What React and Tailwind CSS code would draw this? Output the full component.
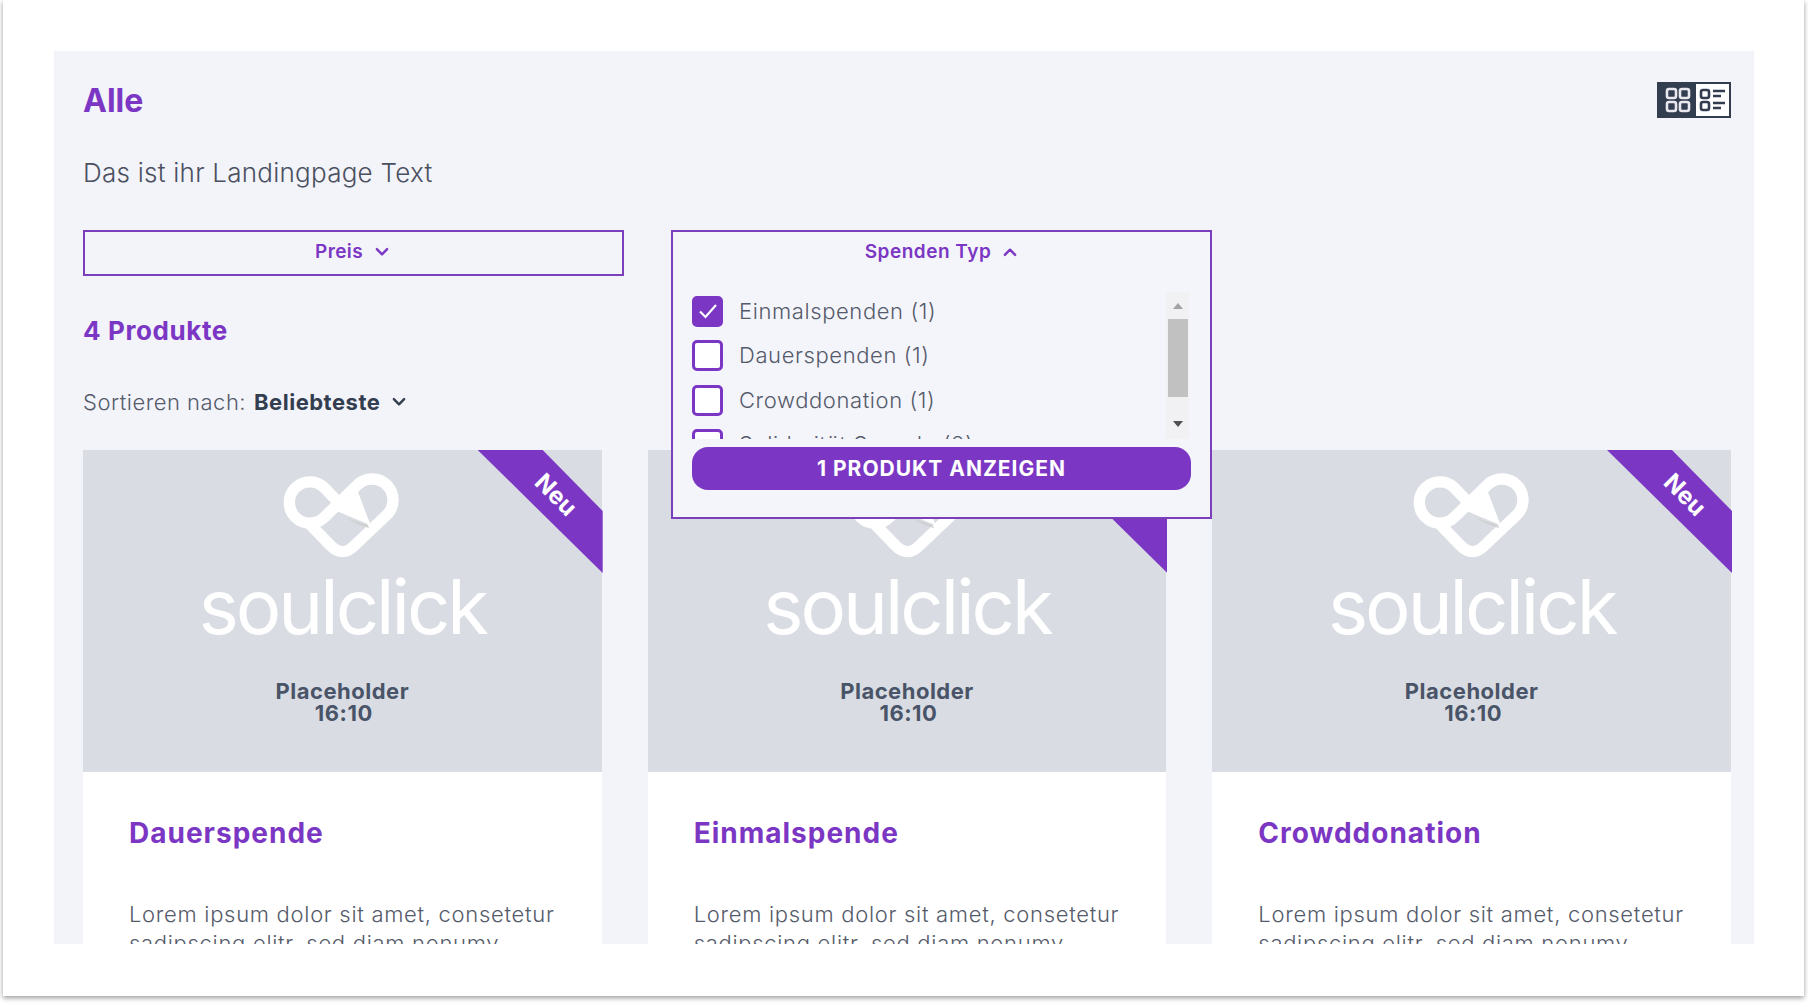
function Chevron({ up = false, className = "" }) {
  return (
    <svg viewBox="0 0 14 10" className={className} fill="none" stroke="currentColor" strokeWidth="2.1" strokeLinecap="round" strokeLinejoin="round">
      <path d={up ? "M2.5 7.5 L7 3 L11.5 7.5" : "M2.5 2.5 L7 7 L11.5 2.5"} />
    </svg>
  );
}

function Logo() {
  return (
    <svg viewBox="0 0 450 330" className="w-[150px] h-[110px] mt-[10px] ml-[6px] shrink-0" fill="none">
      <path d="M112 185 L180 255 Q218 295 255 255 L350 165 A62 62 0 0 0 262 75 L165 170 A62 62 0 1 1 165 85 L222 145" stroke="#ffffff" strokeWidth="34" strokeLinejoin="round" />
      <path d="M263 94 L302 196 L205 155 Z" fill="#ffffff" />
      <path d="M228 174 L292 195 L298 205 L262 192 Z" fill="#cfcfcf" />
    </svg>
  );
}

function Card({ title }) {
  return (
    <div className="bg-white h-[600px]">
      <div className="relative h-[322px] bg-[#d9dde3] flex flex-col items-center">
        <Logo />
        <div className="text-white text-[76px] leading-[76px] mt-[-2px] font-normal tracking-[-3px]">soulclick</div>
        <div className="mt-[36px] text-[22px] leading-[22px] font-bold tracking-[0.5px] text-[#4a5468] text-center">
          Placeholder
          <br />
          <span className="pl-[3px]">16:10</span>
        </div>
        <div className="absolute top-0 right-[-1px] w-[125px] h-[123px] bg-[#7b37c4] [clip-path:polygon(0_0,65px_0,125px_61px,125px_123px)]" />
        <div className="absolute top-[33px] right-[22px] rotate-45 text-white font-bold text-[24px] leading-[24px]">Neu</div>
      </div>
      <div className="px-[46px] pt-[44px]">
        <div className="text-[28px] leading-[34px] font-bold tracking-[1px] text-[#7b37c4]">{title}</div>
        <p className="mt-[50px] text-[22px] leading-[29px] tracking-[0.7px] text-[#555b6a] font-light">
          Lorem ipsum dolor sit amet, consetetur sadipscing elitr, sed diam nonumy
        </p>
      </div>
    </div>
  );
}

function Check({ label, checked }) {
  return (
    <div className="flex items-center h-[44.5px] shrink-0">
      <div className={`w-[31px] h-[31px] rounded-[5px] border-[3px] border-[#7b37c4] flex items-center justify-center ${checked ? "bg-[#7b37c4]" : "bg-white"}`}>
        {checked && (
          <svg viewBox="0 0 24 24" className="w-[24px] h-[24px]" fill="none" stroke="#ffffff" strokeWidth="2.2">
            <path d="M4 12.5 L9.5 18 L20 6" />
          </svg>
        )}
      </div>
      <span className="ml-[16px] text-[22px] tracking-[0.6px] text-[#555b6a] font-light">{label}</span>
    </div>
  );
}

export default function App() {
  return (
    <div className="min-h-[1004px] bg-white font-['Inter',sans-serif]">
      <div className="ml-[3px] w-[1801px] h-[996px] bg-white shadow-[0_2px_5px_rgba(0,0,0,0.4)] px-[51px] pt-[51px]">
        <div className="w-[1700px] h-[893px] bg-[#f3f3fa] overflow-hidden pl-[29px] pr-[23px] pt-[31px]">
          <div className="flex items-center justify-between h-[36px]">
            <h1 className="text-[32px] font-bold text-[#7b37c4] mt-[2px]">Alle</h1>
            <div className="flex w-[74px] h-[36px] border-[2px] border-[#333d50] bg-white">
              <div className="w-[37px] bg-[#333d50] flex items-center justify-center">
                <svg viewBox="0 0 30 28" className="w-[30px] h-[28px]" fill="none" stroke="#e8e8ee" strokeWidth="2.6">
                  <rect x="4" y="3" width="9" height="9" rx="2" /><rect x="17" y="3" width="9" height="9" rx="2" />
                  <rect x="4" y="16" width="9" height="9" rx="2" /><rect x="17" y="16" width="9" height="9" rx="2" />
                </svg>
              </div>
              <div className="flex-1 flex items-center justify-center">
                <svg viewBox="0 0 30 28" className="w-[30px] h-[28px]" fill="none" stroke="#333d50" strokeWidth="2.6">
                  <rect x="3" y="4" width="8" height="8" rx="2" /><rect x="3" y="16" width="8" height="8" rx="2" />
                  <path d="M15 5 H27 M15 10 H23 M15 17 H27 M15 22 H23" />
                </svg>
              </div>
            </div>
          </div>

          <p className="mt-[38px] text-[26px] leading-[34px] tracking-[0.25px] text-[#4a5060] font-light">Das ist ihr Landingpage Text</p>

          <div className="mt-[40px] flex gap-[47px] h-[46px]">
            <div className="w-[541px] h-[46px] border-[2px] border-[#7b3fbb] flex items-center justify-center gap-[11px] pb-[2px] pr-[2px] text-[#7b37c4] font-semibold text-[19px] tracking-[0.4px]">
              Preis <Chevron className="w-[16px] h-[12px]" />
            </div>
            <div className="relative w-[541px]">
              <div className="absolute z-10 inset-x-0 top-0 h-[289px] bg-[#f4f4fb] border-[2px] border-[#7b3fbb] px-[19px]">
                <div className="h-[38px] mt-[1px] flex items-center justify-center gap-[11px] text-[#7b37c4] font-semibold text-[19px] tracking-[0.5px]">
                  Spenden Typ <Chevron up className="w-[16px] h-[12px]" />
                </div>
                <div className="mt-[21px] h-[147px] flex overflow-hidden">
                  <div className="flex-1 flex flex-col overflow-hidden mt-[-3px]">
                    <Check label="Einmalspenden (1)" checked />
                    <Check label="Dauerspenden (1)" />
                    <Check label="Crowddonation (1)" />
                    <Check label="Solidarität Spende (2)" />
                  </div>
                  <div className="w-[23px] mr-[2px] bg-[#f1f1f3] flex flex-col items-center">
                    <div className="h-[27px] flex items-center justify-center">
                      <div className="w-0 h-0 border-x-[5px] border-x-transparent border-b-[6px] border-b-[#a3a3a3]" />
                    </div>
                    <div className="w-[20px] h-[78px] bg-[#c1c1c1]" />
                    <div className="flex-1 flex items-end justify-center pb-[12px]">
                      <div className="w-0 h-0 border-x-[5px] border-x-transparent border-t-[6px] border-t-[#505050]" />
                    </div>
                  </div>
                </div>
                <div className="mt-[8px] h-[43px] rounded-[16px] bg-[#7b37c4] flex items-center justify-center text-white font-bold text-[21px] tracking-[1px]">
                  1 PRODUKT ANZEIGEN
                </div>
              </div>
            </div>
          </div>

          <div className="mt-[38px] text-[26px] leading-[34px] font-bold tracking-[0.6px] text-[#7b37c4]">4 Produkte</div>
          <div className="mt-[39px] flex items-center h-[30px] text-[22px] tracking-[0.5px] text-[#555b6a]">
            <span className="font-light">Sortieren nach:</span>
            <span className="ml-[8px] font-bold text-[#333d50]">Beliebteste</span>
            <Chevron className="ml-[11px] w-[16px] h-[12px] text-[#333d50]" />
          </div>

          <div className="mt-[33px] grid grid-cols-3 gap-[46px]">
            <Card title="Dauerspende" />
            <Card title="Einmalspende" />
            <Card title="Crowddonation" />
          </div>
        </div>
      </div>
    </div>
  );
}
